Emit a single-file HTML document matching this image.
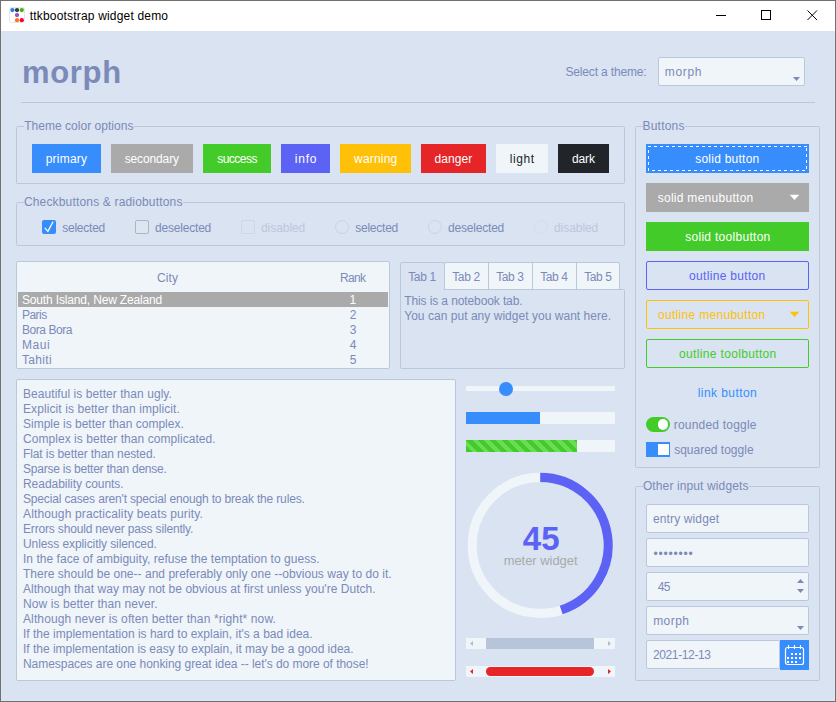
<!DOCTYPE html>
<html lang="en">
<head>
<meta charset="utf-8">
<title>ttkbootstrap widget demo</title>
<style>
html,body{margin:0;padding:0;}
body{width:836px;height:702px;overflow:hidden;background:#d9e3f1;font-family:"Liberation Sans",sans-serif;font-size:12px;color:#7b8ab8;}
#win{position:absolute;left:0;top:0;width:836px;height:702px;background:#d9e3f1;overflow:hidden;}
#win *{box-sizing:border-box;}
.abs{position:absolute;}
.t{position:absolute;white-space:pre;}
.frame{position:absolute;border:1px solid #bac8db;border-radius:1.5px;}
.gap{position:absolute;background:#d9e3f1;height:3px;}
.btn{position:absolute;height:29px;}
.entry{position:absolute;height:29px;background:#f0f5fa;border:1px solid #bac8db;border-radius:2px;}
.chk{position:absolute;width:14px;height:14px;border-radius:2px;}
.rad{position:absolute;width:14px;height:14px;border-radius:7px;}
</style>
</head>
<body>
<div id="win">

<!-- title bar -->
<div class="abs" style="left:0;top:0;width:836px;height:31px;background:#ffffff;"></div>
<svg class="abs" style="left:9px;top:7px;" width="16" height="16" viewBox="0 0 16 16">
  <rect x="0.5" y="0.5" width="15" height="15" rx="2" fill="#fff" stroke="#e6e6e6"/>
  <circle cx="3.4" cy="3.1" r="2.15" fill="#2780e3"/>
  <circle cx="8" cy="3.1" r="2.15" fill="#373a3c"/>
  <circle cx="12.8" cy="3.1" r="2.15" fill="#3fb618"/>
  <circle cx="8" cy="8.1" r="2.15" fill="#9954bb"/>
  <circle cx="8" cy="13.2" r="2.15" fill="#ff7518"/>
  <circle cx="12.8" cy="13.2" r="2.15" fill="#ff0039"/>
</svg>
<svg class="abs" style="left:700px;top:1px;" width="135" height="30" viewBox="0 0 135 30">
  <path d="M16 14.5h10" stroke="#000" stroke-width="1" fill="none"/>
  <rect x="61.5" y="9.5" width="9" height="9" stroke="#000" stroke-width="1" fill="none"/>
  <path d="M107.5 9.5l9.5 9.5M117 9.5l-9.5 9.5" stroke="#000" stroke-width="1" fill="none"/>
</svg>

<!-- header -->
<div class="entry" style="left:658px;top:57px;width:147px;height:29px;"></div>
<svg class="abs" style="left:792px;top:76px;" width="9" height="6" viewBox="0 0 9 6"><path d="M1 1h7l-3.5 4z" fill="#7b8ab8"/></svg>
<div class="abs" style="left:21px;top:102px;width:794px;height:1px;background:#bac8db;"></div>

<!-- theme color options -->
<div class="frame" style="left:16px;top:126px;width:609px;height:58px;"></div>
<div class="gap" style="left:24px;top:125px;width:110px;"></div>
<div class="btn" style="left:32px;top:144px;width:69px;background:#378dfc;"></div>
<div class="btn" style="left:111px;top:144px;width:82px;background:#aaaaaa;"></div>
<div class="btn" style="left:203px;top:144px;width:68px;background:#43cc29;"></div>
<div class="btn" style="left:281px;top:144px;width:49px;background:#5b62f4;"></div>
<div class="btn" style="left:340px;top:144px;width:71px;background:#ffc107;"></div>
<div class="btn" style="left:421px;top:144px;width:65px;background:#e52527;"></div>
<div class="btn" style="left:496px;top:144px;width:52px;background:#f0f5fa;"></div>
<div class="btn" style="left:558px;top:144px;width:51px;background:#212529;"></div>

<!-- checkbuttons & radiobuttons -->
<div class="frame" style="left:16px;top:202px;width:609px;height:44px;"></div>
<div class="gap" style="left:24px;top:201px;width:159px;"></div>
<svg class="abs" style="left:42px;top:220px;" width="14" height="14" viewBox="0 0 14 14">
  <rect x="0" y="0" width="14" height="14" rx="2" fill="#378dfc"/>
  <path d="M2.8 7.9L5.9 11.4L11.1 1.6" stroke="#fff" stroke-width="1.2" fill="none"/>
</svg>
<div class="chk" style="left:135px;top:220px;border:1px solid #b3b4ba;background:#dce5f2;"></div>
<div class="chk" style="left:241px;top:220px;border:1px solid #ccd6e7;"></div>
<div class="rad" style="left:335px;top:220px;border:1px solid #c9d3e5;"></div>
<div class="rad" style="left:428px;top:220px;border:1px solid #c9d3e5;"></div>
<div class="rad" style="left:534px;top:220px;border:1px solid #d3dcec;"></div>

<!-- treeview -->
<div class="abs" style="left:16px;top:261px;width:374px;height:108px;background:#f0f5fa;border:1px solid #bac8db;border-radius:2px;"></div>
<div class="abs" style="left:18px;top:292px;width:370px;height:15px;background:#aaaaaa;"></div>

<!-- notebook -->
<div class="abs" style="left:400px;top:289px;width:225px;height:80px;border:1px solid #bac8db;border-radius:0 1.5px 1.5px 1.5px;"></div>
<div class="abs" style="left:444px;top:262px;width:176px;height:28px;background:#f0f5fa;border:1px solid #bac8db;border-radius:2px 2px 0 0;"></div>
<div class="abs" style="left:488px;top:263px;width:1px;height:26px;background:#bac8db;"></div>
<div class="abs" style="left:532px;top:263px;width:1px;height:26px;background:#bac8db;"></div>
<div class="abs" style="left:576px;top:263px;width:1px;height:26px;background:#bac8db;"></div>
<div class="abs" style="left:400px;top:262px;width:45px;height:28px;background:#d9e3f1;border:1px solid #bac8db;border-bottom:none;border-radius:2px 2px 0 0;"></div>

<!-- text widget -->
<div class="abs" style="left:16px;top:379px;width:440px;height:302px;background:#f0f5fa;border:1px solid #bac8db;border-radius:2px;"></div>

<!-- scale -->
<div class="abs" style="left:466px;top:386px;width:149px;height:5px;background:#f0f5fa;"></div>
<div class="abs" style="left:499px;top:382px;width:13.5px;height:13.5px;border-radius:7px;background:#378dfc;"></div>
<!-- progressbars -->
<div class="abs" style="left:466px;top:412px;width:149px;height:12px;background:#f0f5fa;"></div>
<div class="abs" style="left:466px;top:412px;width:74px;height:12px;background:#378dfc;"></div>
<div class="abs" style="left:466px;top:440px;width:149px;height:12px;background:#f0f5fa;"></div>
<div class="abs" style="left:466px;top:440px;width:111px;height:12px;background:repeating-linear-gradient(45deg,#43cc29 0,#43cc29 4.243px,#6adc55 4.243px,#6adc55 8.485px);"></div>

<!-- meter -->
<svg class="abs" style="left:465px;top:470px;" width="152" height="152" viewBox="0 0 152 152">
  <circle cx="75.20" cy="75.35" r="68.00" fill="none" stroke="#f0f5fa" stroke-width="9.1"/>
  <path d="M75.20 7.35 A68.00 68.00 0 0 1 96.21 140.02" fill="none" stroke="#5b62f4" stroke-width="9.1"/>
</svg>

<!-- scrollbars -->
<div class="abs" style="left:466px;top:638px;width:149px;height:11px;background:#f0f5fa;"></div>
<div class="abs" style="left:486px;top:638px;width:108px;height:11px;background:#b7c5da;"></div>
<svg class="abs" style="left:466px;top:638px;" width="149" height="11" viewBox="0 0 149 11"><path d="M7 3v5l-3-2.5z M142 3v5l3-2.5z" fill="#b0bdd4"/></svg>
<div class="abs" style="left:466px;top:666px;width:149px;height:11px;background:#f0f5fa;"></div>
<div class="abs" style="left:486px;top:667px;width:108px;height:9px;border-radius:4.5px;background:#e52527;"></div>
<svg class="abs" style="left:466px;top:666px;" width="149" height="11" viewBox="0 0 149 11"><path d="M7 3v5l-3-2.5z M142 3v5l3-2.5z" fill="#e52527"/></svg>

<!-- buttons frame -->
<div class="frame" style="left:635px;top:126px;width:185px;height:342px;"></div>
<div class="gap" style="left:643px;top:125px;width:42px;"></div>
<div class="btn" style="left:646px;top:144px;width:163px;background:#378dfc;"></div>
<svg class="abs" style="left:648px;top:146px;" width="159" height="25" viewBox="0 0 159 25" shape-rendering="crispEdges">
  <path d="M0 0.5H159M158.5 2V25M4 24.5H159M0.5 4V25" stroke="#fff" stroke-width="1" stroke-dasharray="3 3" fill="none"/>
</svg>
<div class="btn" style="left:646px;top:183px;width:163px;background:#aaaaaa;"></div>
<svg class="abs" style="left:789px;top:194px;" width="11" height="7" viewBox="0 0 11 7"><path d="M0.7 0.8h9.6l-4.8 5.3z" fill="#fff"/></svg>
<div class="btn" style="left:646px;top:222px;width:163px;background:#43cc29;"></div>
<div class="btn" style="left:646px;top:261px;width:163px;border:1px solid #5b62f4;border-radius:2px;"></div>
<div class="btn" style="left:646px;top:300px;width:163px;border:1px solid #ffc107;border-radius:2px;"></div>
<svg class="abs" style="left:789px;top:311px;" width="11" height="7" viewBox="0 0 11 7"><path d="M0.7 0.8h9.6l-4.8 5.3z" fill="#ffc107"/></svg>
<div class="btn" style="left:646px;top:339px;width:163px;border:1px solid #43cc29;border-radius:2px;"></div>
<div class="abs" style="left:646px;top:417px;width:24px;height:15px;border-radius:7.5px;background:#43cc29;"></div>
<div class="abs" style="left:657.7px;top:419.2px;width:10.7px;height:10.7px;border-radius:5.4px;background:#fff;"></div>
<div class="abs" style="left:646px;top:442px;width:24px;height:15px;background:#378dfc;"></div>
<div class="abs" style="left:658px;top:444px;width:10.5px;height:11px;background:#fff;"></div>

<!-- other input widgets -->
<div class="frame" style="left:635px;top:486px;width:185px;height:195px;"></div>
<div class="gap" style="left:643px;top:485px;width:106px;"></div>
<div class="entry" style="left:646px;top:504px;width:163px;"></div>
<div class="entry" style="left:646px;top:538px;width:163px;"></div>
<div class="entry" style="left:646px;top:572px;width:163px;"></div>
<svg class="abs" style="left:796px;top:578px;" width="9" height="18" viewBox="0 0 9 18"><path d="M1 5h7l-3.5-4z M1 11h7l-3.5 4z" fill="#7b8ab8"/></svg>
<div class="entry" style="left:646px;top:606px;width:163px;"></div>
<svg class="abs" style="left:796px;top:625px;" width="9" height="6" viewBox="0 0 9 6"><path d="M1 1h7l-3.5 4z" fill="#7b8ab8"/></svg>
<div class="entry" style="left:646px;top:640px;width:134px;"></div>
<div class="abs" style="left:780px;top:640px;width:29px;height:30px;background:#378dfc;"></div>
<svg class="abs" style="left:780px;top:640px;" width="29" height="30" viewBox="0 0 29 30">
  <rect x="5.5" y="7.5" width="18" height="17" rx="2" fill="none" stroke="#fff" stroke-width="1.2"/>
  <path d="M8.5 5v4M14.5 5v4M20.5 5v4" stroke="#fff" stroke-width="1.1" fill="none"/>
  <g fill="#fff">
    <rect x="11" y="13" width="2" height="2"/><rect x="15" y="13" width="2" height="2"/><rect x="19" y="13" width="2" height="2"/>
    <rect x="7" y="17" width="2" height="2"/><rect x="11" y="17" width="2" height="2"/><rect x="15" y="17" width="2" height="2"/><rect x="19" y="17" width="2" height="2"/>
    <rect x="7" y="21" width="2" height="2"/><rect x="11" y="21" width="2" height="2"/><rect x="15" y="21" width="2" height="2"/>
  </g>
</svg>

<!-- texts -->
<div class="t" style="left:29.82px;top:9px;line-height:14px;height:14px;letter-spacing:0.179px;color:#000;">ttkbootstrap widget demo</div>
<div class="t" style="left:21.96px;top:55px;line-height:35px;height:35px;letter-spacing:0.682px;font-size:31px;font-weight:bold;">morph</div>
<div class="t" style="left:565.46px;top:65px;line-height:14px;height:14px;letter-spacing:-0.160px;">Select a theme:</div>
<div class="t" style="left:664.80px;top:65px;line-height:14px;height:14px;letter-spacing:0.641px;">morph</div>
<div class="t" style="left:24.23px;top:119px;line-height:14px;height:14px;letter-spacing:0.027px;">Theme color options</div>
<div class="t" style="left:23.89px;top:195px;line-height:14px;height:14px;letter-spacing:0.171px;">Checkbuttons &amp; radiobuttons</div>
<div class="t" style="left:45.73px;top:152px;line-height:14px;height:14px;letter-spacing:0.216px;color:#fff;">primary</div>
<div class="t" style="left:124.67px;top:152px;line-height:14px;height:14px;letter-spacing:-0.126px;color:#fff;">secondary</div>
<div class="t" style="left:217.17px;top:152px;line-height:14px;height:14px;letter-spacing:-0.513px;color:#fff;">success</div>
<div class="t" style="left:294.70px;top:152px;line-height:14px;height:14px;letter-spacing:0.820px;color:#fff;">info</div>
<div class="t" style="left:354.02px;top:152px;line-height:14px;height:14px;letter-spacing:0.205px;color:#fff;">warning</div>
<div class="t" style="left:434.50px;top:152px;line-height:14px;height:14px;letter-spacing:0.068px;color:#fff;">danger</div>
<div class="t" style="left:509.69px;top:152px;line-height:14px;height:14px;letter-spacing:0.596px;color:#212529;">light</div>
<div class="t" style="left:572.00px;top:152px;line-height:14px;height:14px;letter-spacing:-0.119px;color:#fff;">dark</div>
<div class="t" style="left:62.17px;top:221px;line-height:14px;height:14px;letter-spacing:-0.227px;">selected</div>
<div class="t" style="left:155.00px;top:221px;line-height:14px;height:14px;letter-spacing:-0.196px;">deselected</div>
<div class="t" style="left:261.00px;top:221px;line-height:14px;height:14px;letter-spacing:-0.061px;color:#bdc7dd;">disabled</div>
<div class="t" style="left:355.17px;top:221px;line-height:14px;height:14px;letter-spacing:-0.227px;">selected</div>
<div class="t" style="left:448.00px;top:221px;line-height:14px;height:14px;letter-spacing:-0.196px;">deselected</div>
<div class="t" style="left:554.00px;top:221px;line-height:14px;height:14px;letter-spacing:-0.061px;color:#bdc7dd;">disabled</div>
<div class="t" style="left:156.89px;top:271px;line-height:14px;height:14px;letter-spacing:0.156px;">City</div>
<div class="t" style="left:340.02px;top:271px;line-height:14px;height:14px;letter-spacing:-0.682px;">Rank</div>
<div class="t" style="left:22.00px;top:293px;line-height:14px;height:14px;letter-spacing:-0.159px;color:#fff;">South Island, New Zealand</div>
<div class="t" style="left:22.00px;top:308px;line-height:14px;height:14px;letter-spacing:-0.539px;">Paris</div>
<div class="t" style="left:22.00px;top:323px;line-height:14px;height:14px;letter-spacing:-0.441px;">Bora Bora</div>
<div class="t" style="left:22.00px;top:338px;line-height:14px;height:14px;letter-spacing:0.516px;">Maui</div>
<div class="t" style="left:22.00px;top:353px;line-height:14px;height:14px;letter-spacing:0.309px;">Tahiti</div>
<div class="t" style="left:349.50px;top:293px;line-height:14px;height:14px;color:#fff;">1</div>
<div class="t" style="left:349.66px;top:308px;line-height:14px;height:14px;color:#7b8ab8;">2</div>
<div class="t" style="left:349.70px;top:323px;line-height:14px;height:14px;color:#7b8ab8;">3</div>
<div class="t" style="left:349.70px;top:338px;line-height:14px;height:14px;color:#7b8ab8;">4</div>
<div class="t" style="left:349.67px;top:353px;line-height:14px;height:14px;color:#7b8ab8;">5</div>
<div class="t" style="left:408.23px;top:270px;line-height:14px;height:14px;letter-spacing:-0.375px;">Tab 1</div>
<div class="t" style="left:452.23px;top:270px;line-height:14px;height:14px;letter-spacing:-0.371px;">Tab 2</div>
<div class="t" style="left:496.23px;top:270px;line-height:14px;height:14px;letter-spacing:-0.390px;">Tab 3</div>
<div class="t" style="left:540.23px;top:270px;line-height:14px;height:14px;letter-spacing:-0.434px;">Tab 4</div>
<div class="t" style="left:584.23px;top:270px;line-height:14px;height:14px;letter-spacing:-0.396px;">Tab 5</div>
<div class="t" style="left:404.23px;top:294px;line-height:14px;height:14px;letter-spacing:-0.108px;">This is a notebook tab.</div>
<div class="t" style="left:404.24px;top:309px;line-height:14px;height:14px;letter-spacing:0.032px;">You can put any widget you want here.</div>
<div class="t" style="left:23.00px;top:387px;line-height:14px;height:14px;letter-spacing:0.057px;">Beautiful is better than ugly.</div>
<div class="t" style="left:23.00px;top:402px;line-height:14px;height:14px;letter-spacing:0.087px;">Explicit is better than implicit.</div>
<div class="t" style="left:23.00px;top:417px;line-height:14px;height:14px;">Simple is better than complex.</div>
<div class="t" style="left:23.00px;top:432px;line-height:14px;height:14px;letter-spacing:0.054px;">Complex is better than complicated.</div>
<div class="t" style="left:23.00px;top:447px;line-height:14px;height:14px;letter-spacing:-0.099px;">Flat is better than nested.</div>
<div class="t" style="left:23.00px;top:462px;line-height:14px;height:14px;letter-spacing:-0.231px;">Sparse is better than dense.</div>
<div class="t" style="left:23.00px;top:477px;line-height:14px;height:14px;letter-spacing:-0.044px;">Readability counts.</div>
<div class="t" style="left:23.00px;top:492px;line-height:14px;height:14px;letter-spacing:-0.160px;">Special cases aren&#x27;t special enough to break the rules.</div>
<div class="t" style="left:23.00px;top:507px;line-height:14px;height:14px;letter-spacing:0.137px;">Although practicality beats purity.</div>
<div class="t" style="left:23.00px;top:522px;line-height:14px;height:14px;letter-spacing:-0.167px;">Errors should never pass silently.</div>
<div class="t" style="left:23.00px;top:537px;line-height:14px;height:14px;letter-spacing:-0.085px;">Unless explicitly silenced.</div>
<div class="t" style="left:23.00px;top:552px;line-height:14px;height:14px;letter-spacing:0.035px;">In the face of ambiguity, refuse the temptation to guess.</div>
<div class="t" style="left:23.00px;top:567px;line-height:14px;height:14px;letter-spacing:0.025px;">There should be one-- and preferably only one --obvious way to do it.</div>
<div class="t" style="left:23.00px;top:582px;line-height:14px;height:14px;letter-spacing:0.033px;">Although that way may not be obvious at first unless you&#x27;re Dutch.</div>
<div class="t" style="left:23.00px;top:597px;line-height:14px;height:14px;letter-spacing:0.077px;">Now is better than never.</div>
<div class="t" style="left:23.00px;top:612px;line-height:14px;height:14px;letter-spacing:0.114px;">Although never is often better than *right* now.</div>
<div class="t" style="left:23.00px;top:627px;line-height:14px;height:14px;letter-spacing:0.008px;">If the implementation is hard to explain, it&#x27;s a bad idea.</div>
<div class="t" style="left:23.00px;top:642px;line-height:14px;height:14px;letter-spacing:-0.015px;">If the implementation is easy to explain, it may be a good idea.</div>
<div class="t" style="left:23.00px;top:657px;line-height:14px;height:14px;letter-spacing:-0.046px;">Namespaces are one honking great idea -- let&#x27;s do more of those!</div>
<div class="t" style="left:642.52px;top:119px;line-height:14px;height:14px;letter-spacing:0.204px;">Buttons</div>
<div class="t" style="left:695.17px;top:152px;line-height:14px;height:14px;letter-spacing:0.249px;color:#fff;">solid button</div>
<div class="t" style="left:657.67px;top:191px;line-height:14px;height:14px;letter-spacing:0.281px;color:#fff;">solid menubutton</div>
<div class="t" style="left:685.17px;top:230px;line-height:14px;height:14px;letter-spacing:0.293px;color:#fff;">solid toolbutton</div>
<div class="t" style="left:689.00px;top:269px;line-height:14px;height:14px;letter-spacing:0.325px;color:#5b62f4;">outline button</div>
<div class="t" style="left:658.00px;top:308px;line-height:14px;height:14px;letter-spacing:0.306px;color:#ffc107;">outline menubutton</div>
<div class="t" style="left:679.00px;top:347px;line-height:14px;height:14px;letter-spacing:0.346px;color:#43cc29;">outline toolbutton</div>
<div class="t" style="left:697.69px;top:386px;line-height:14px;height:14px;letter-spacing:0.438px;color:#378dfc;">link button</div>
<div class="t" style="left:673.70px;top:418px;line-height:14px;height:14px;letter-spacing:0.212px;">rounded toggle</div>
<div class="t" style="left:674.17px;top:443px;line-height:14px;height:14px;">squared toggle</div>
<div class="t" style="left:642.93px;top:479px;line-height:14px;height:14px;letter-spacing:0.117px;">Other input widgets</div>
<div class="t" style="left:652.99px;top:512px;line-height:14px;height:14px;letter-spacing:0.127px;">entry widget</div>
<div class="t" style="left:653.43px;top:547px;line-height:14px;height:14px;letter-spacing:0.820px;">••••••••</div>
<div class="t" style="left:657.72px;top:580px;line-height:14px;height:14px;letter-spacing:-0.568px;">45</div>
<div class="t" style="left:653.20px;top:614px;line-height:14px;height:14px;letter-spacing:0.441px;">morph</div>
<div class="t" style="left:652.90px;top:648px;line-height:14px;height:14px;letter-spacing:-0.361px;">2021-12-13</div>
<div class="t" style="left:522.80px;top:520px;line-height:37px;height:37px;letter-spacing:0.012px;font-size:33px;font-weight:bold;color:#5b62f4;">45</div>
<div class="t" style="left:503.64px;top:553px;line-height:15px;height:15px;letter-spacing:-0.042px;font-size:13px;color:#aaaaaa;">meter widget</div>

<!-- window border -->
<div class="abs" style="left:1px;top:31px;width:834px;height:670px;border:1px solid #dce7f6;border-top:none;pointer-events:none;"></div>
<div class="abs" style="left:0;top:0;width:836px;height:702px;border:1px solid #71706e;pointer-events:none;"></div>
</div>
</body>
</html>
